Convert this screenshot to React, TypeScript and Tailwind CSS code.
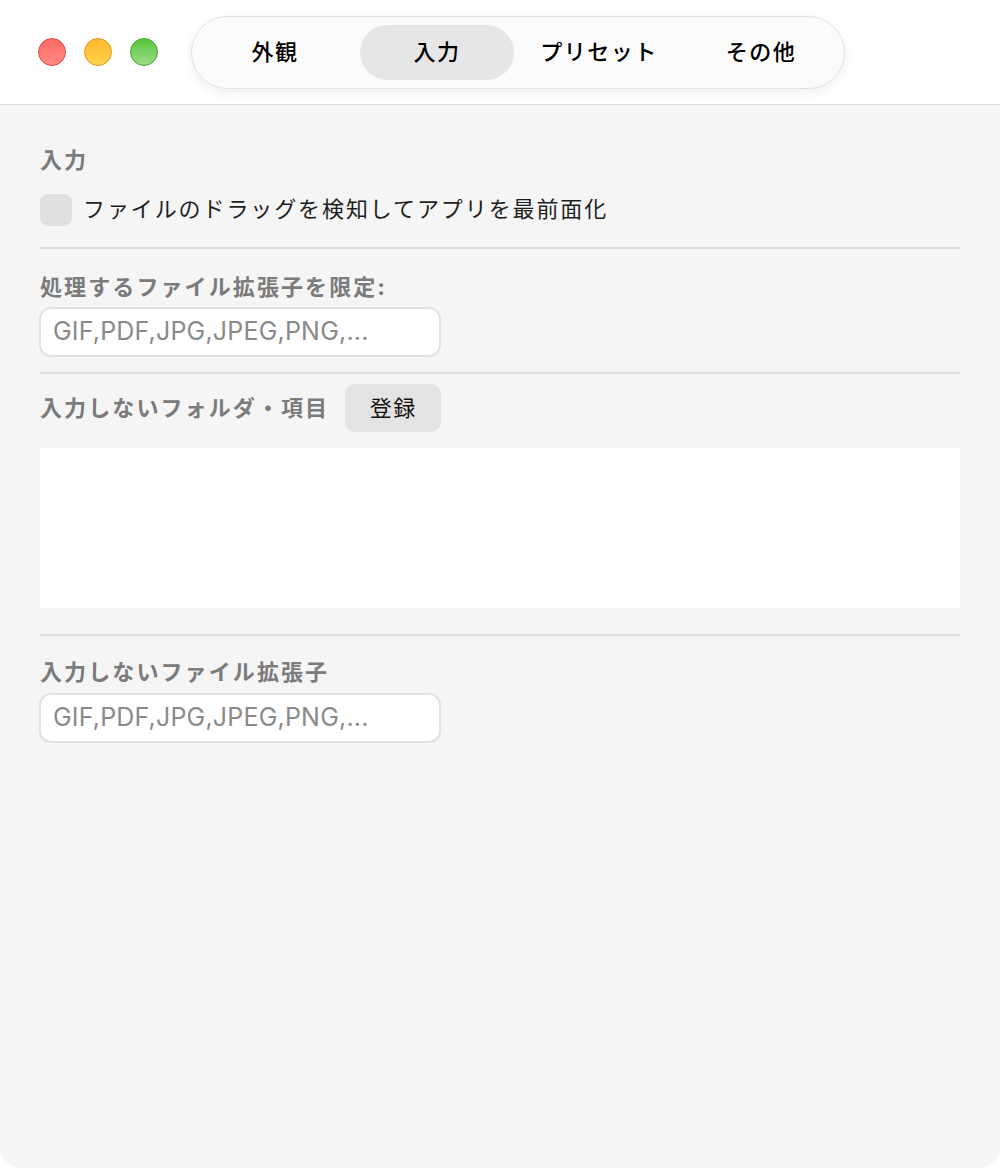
import React from "react";

const FONT = '"Inter", "Noto Sans CJK JP", sans-serif';

const tabs = ["外観", "入力", "プリセット", "その他"];

function TrafficLights() {
  return (
    <div className="flex items-center gap-[18px]">
      <span className="block w-[28px] h-[28px] rounded-full bg-gradient-to-b from-[#ff6a63] to-[#ff8a84] border border-[#e0443e]" />
      <span className="block w-[28px] h-[28px] rounded-full bg-gradient-to-b from-[#ffb92b] to-[#ffd24a] border border-[#dc9a1c]" />
      <span className="block w-[28px] h-[28px] rounded-full bg-gradient-to-b from-[#55c53a] to-[#9edb86] border border-[#3ea52a]" />
    </div>
  );
}

function TabBar({ active }: { active: number }) {
  return (
    <div className="flex h-[73px] w-[654px] items-stretch rounded-full border border-[#e2e2e2] bg-[#fbfbfb] px-[2px] shadow-[0_4px_12px_rgba(0,0,0,0.06)]">
      {tabs.map((t, i) => (
        <div key={t} className="flex w-[162px] items-stretch py-[8px] px-[4px]">
          <div
            className={
              "flex flex-1 items-center justify-center rounded-full text-[22px] font-medium tracking-[1.5px] text-black " +
              (i === active ? "bg-[#e6e6e6]" : "")
            }
          >
            {t}
          </div>
        </div>
      ))}
    </div>
  );
}

function Divider({ className }: { className: string }) {
  return <div className={"h-[2px] bg-[#dedede] " + className} />;
}

function Label({ children, className }: { children: React.ReactNode; className?: string }) {
  return (
    <div className={"text-[22px] leading-[32px] font-bold tracking-[2.1px] text-[#7b7b7b] " + (className ?? "")}>
      {children}
    </div>
  );
}

function ExtInput({ className }: { className: string }) {
  return (
    <div
      className={
        "flex h-[50px] w-[402px] items-center rounded-[12px] border-2 border-[#e2e2e2] bg-white px-[12px] text-[25px] tracking-[0.2px] text-[#8a8a8a] " +
        className
      }
    >
      GIF,PDF,JPG,JPEG,PNG,...
    </div>
  );
}

export default function App() {
  return (
    <div className="h-[1168px] w-[1000px] bg-white" style={{ fontFamily: FONT }}>
      <div className="flex h-full flex-col overflow-hidden rounded-[22px] bg-[#f5f5f5]">
        <div className="flex h-[105px] shrink-0 items-center border-b border-[#dedede] bg-white pl-[38px]">
          <TrafficLights />
          <div className="ml-[33px]">
            <TabBar active={1} />
          </div>
        </div>

        <div className="flex flex-col px-[40px]">
          <Label className="mt-[39px]">入力</Label>
          <div className="mt-[17px] flex items-center gap-[11px]">
            <div className="h-[32px] w-[32px] rounded-[8px] bg-[#e0e0e0]" />
            <span className="text-[22px] tracking-[1.9px] text-[#1e1e1e]">ファイルのドラッグを検知してアプリを最前面化</span>
          </div>

          <Divider className="mt-[21px]" />
          <Label className="mt-[22px]">処理するファイル拡張子を限定:</Label>
          <ExtInput className="mt-[4px] -ml-[1px]" />

          <Divider className="mt-[15px]" />
          <div className="mt-[10px] flex items-center gap-[16px]">
            <Label>入力しないフォルダ・項目</Label>
            <button className="flex h-[48px] w-[96px] items-center justify-center rounded-[10px] bg-[#e3e3e3] text-[22px] tracking-[1.5px] text-[#111]">
              登録
            </button>
          </div>
          <div className="mt-[16px] h-[160px] bg-white" />

          <Divider className="mt-[26px]" />
          <Label className="mt-[20px]">入力しないファイル拡張子</Label>
          <ExtInput className="mt-[5px] -ml-[1px]" />
        </div>
      </div>
    </div>
  );
}
